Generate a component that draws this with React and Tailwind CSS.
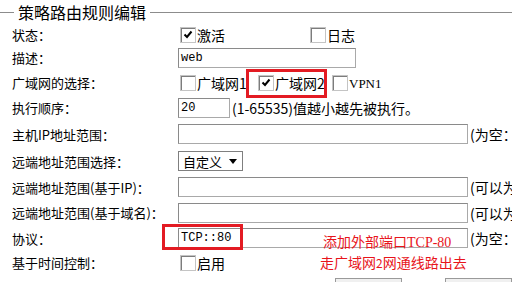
import React from "react";

function Box({ on }) {
  return (
    <span className="inline-flex h-4 w-4 shrink-0 items-center justify-center border border-[#c4c4c4] bg-white shadow-[inset_1px_1px_0_#7c7c7c]">
      {on && (
        <svg width="10" height="9" viewBox="0 0 10 9">
          <path d="M1.5 4.5 L4 7 L8.5 1.5" fill="none" stroke="#000" strokeWidth="2" />
        </svg>
      )}
    </span>
  );
}

function Check({ on, text, w }) {
  return (
    <span className={`flex items-center gap-[1px] ${w}`}>
      <Box on={on} />
      <span className="text-[14px] leading-none">{text}</span>
    </span>
  );
}

const field = "h-5 border border-[#a9a9a9] border-t-[#8a8a8a] border-l-[#8a8a8a] bg-white px-[2px] font-['Liberation_Mono',monospace] text-[12px] leading-[18px]";

function Row({ label, h, children }) {
  return (
    <div className={`flex items-center ${h}`}>
      <div className="w-[166px] shrink-0 text-[13px] leading-none">{label}</div>
      <div className="flex flex-1 items-center whitespace-nowrap">{children}</div>
    </div>
  );
}

export default function App() {
  return (
    <div className="relative h-[282px] w-[512px] overflow-hidden bg-white text-black font-['Noto_Sans_CJK_SC',sans-serif]">
      <div className="flex h-6 items-center">
        <div className="h-px w-[14px] bg-[#8c8c8c]" />
        <span className="px-1 text-[16px] leading-none">策略路由规则编辑</span>
        <div className="h-px flex-1 bg-[#8c8c8c]" />
      </div>

      <div className="pl-3">
        <Row label="状态：" h="h-[21px]">
          <span className="ml-[2px] flex items-center">
            <Check on text="激活" w="w-[130px]" />
            <Check text="日志" />
          </span>
        </Row>
        <Row label="描述：" h="h-[25px]">
          <div className={`${field} w-[178px]`}>web</div>
        </Row>
        <Row label="广域网的选择：" h="h-[25px]">
          <span className="ml-[2px] flex items-center">
            <Check text="广域网1" w="w-[78px]" />
            <Check on text="广域网2" w="w-[74px]" />
            <Check text={<span className="font-['Liberation_Serif',serif] text-[13px]">VPN1</span>} />
          </span>
        </Row>
        <Row label="执行顺序：" h="h-[25px]">
          <div className={`${field} w-[52px]`}>20</div>
          <span className="ml-[2px] text-[14px] leading-none">(1-65535)值越小越先被执行。</span>
        </Row>
        <Row label="主机IP地址范围：" h="h-[28px]">
          <div className={`${field} w-[290px]`} />
          <span className="ml-[2px] text-[14px] leading-none">(为空：</span>
        </Row>
        <Row label="远端地址范围选择：" h="h-[26px]">
          <div className="flex h-[20px] w-[65px] items-center justify-between border border-[#7f7f7f] bg-white pl-1 pr-[5px] text-[13px] leading-none">
            <span>自定义</span>
            <svg width="8" height="5" viewBox="0 0 8 5">
              <path d="M0 0 H8 L4 5 Z" fill="#000" />
            </svg>
          </div>
        </Row>
        <Row label="远端地址范围(基于IP)：" h="h-[26px]">
          <div className={`${field} w-[290px]`} />
          <span className="ml-[2px] text-[14px] leading-none">(可以为空</span>
        </Row>
        <Row label="远端地址范围(基于域名)：" h="h-[25px]">
          <div className={`${field} w-[290px]`} />
          <span className="ml-[2px] text-[14px] leading-none">(可以为空</span>
        </Row>
        <Row label="协议：" h="h-[26px]">
          <div className={`${field} w-[290px]`}>TCP::80</div>
          <span className="ml-[2px] text-[14px] leading-none">(为空：</span>
        </Row>
        <Row label="基于时间控制：" h="h-[23px]">
          <span className="ml-[2px] flex items-center">
            <Check text="启用" />
          </span>
        </Row>
        <div className="flex pt-1 pl-[323px] gap-[43px]">
          <div className="h-6 w-[75px] border border-[#9a9a9a] bg-[#f0f0f0]" />
          <div className="h-6 w-[75px] border border-[#9a9a9a] bg-[#f0f0f0]" />
        </div>
      </div>

      {/* annotations */}
      <div className="absolute left-[246px] top-[69px] h-[29px] w-[81px] border-[3px] border-[#e31b23]" />
      <div className="absolute left-[162px] top-[224px] h-[26px] w-[81px] border-[3px] border-[#e31b23]" />
      <div className="absolute left-[323px] top-[232px] text-[14px] leading-[18px] text-[#e8141b]">
        添加外部端口<span className="font-['Liberation_Serif',serif]">TCP-80</span>
      </div>
      <div className="absolute left-[320px] top-[253px] text-[14px] leading-[18px] text-[#e8141b]">
        走广域网<span className="text-[12px]">2</span>网通线路出去
      </div>
    </div>
  );
}
